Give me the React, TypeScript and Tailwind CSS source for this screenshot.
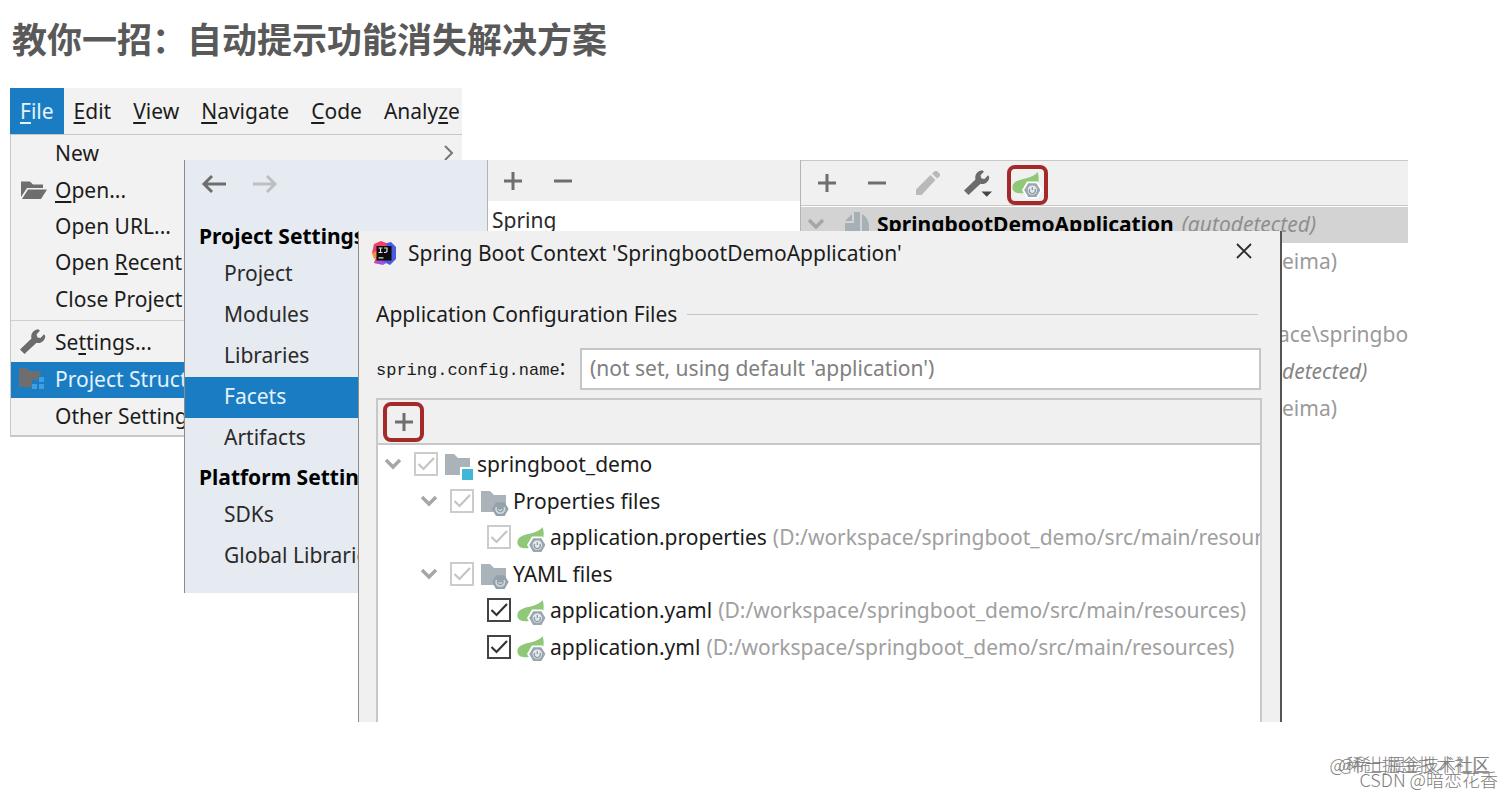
import React from "react";

function Arrow({ flip, className }: { flip?: boolean; className: string }) {
  return (
    <svg viewBox="0 0 26 20" className={"h-5 w-[26px] " + className} fill="none" stroke="currentColor" strokeWidth="3">
      {flip ? <path d="M1 10h22M15 2l8 8-8 8" /> : <path d="M25 10H3M11 2L3 10l8 8" />}
    </svg>
  );
}

function Plus() {
  return (
    <svg viewBox="0 0 20 20" className="h-5 w-5 text-[#6e6e6e]" fill="none" stroke="currentColor" strokeWidth="3">
      <path d="M1 10h18M10 1v18" />
    </svg>
  );
}

function Minus() {
  return (
    <svg viewBox="0 0 20 20" className="h-5 w-5 text-[#6e6e6e]" fill="none" stroke="currentColor" strokeWidth="3">
      <path d="M1 10h18" />
    </svg>
  );
}

function Chevron() {
  return (
    <svg viewBox="0 0 18 14" className="h-3.5 w-[18px] text-[#a6a6a6]" fill="none" stroke="currentColor" strokeWidth="3.4">
      <path d="M2 3l7 7 7-7" />
    </svg>
  );
}

function Wrench({ menu }: { menu?: boolean }) {
  return (
    <svg viewBox="0 0 30 28" className="h-7 w-[30px]" fill="#6b6b6b">
      <path d="M1 21.500L12.500 10.500C11.500 6.500 13.500 2 19 1.200L21 2.500L17.500 6.500L18.500 9.500L21.500 10L25 6.200L26.300 8C26 13 22 15.800 17.500 14.800L5.500 26Z" />
      {menu && <path d="M18.500 22.500h10.500l-5.200 5.300z" fill="#444" />}
    </svg>
  );
}

function Pencil() {
  return (
    <svg viewBox="0 0 26 26" className="h-[26px] w-[26px]" fill="#b9b9b9">
      <path d="M1 25V19.500L15.500 5L20.500 10L6.500 25Z" />
      <path d="M17 3.500L20 1L22 1L25 4V6L22 8.500Z" />
    </svg>
  );
}

function OpenFolder() {
  return (
    <svg viewBox="0 0 26 20" className="ml-0.5 h-5 w-[26px]" fill="#6e6e6e">
      <path d="M0 1.500h9l3 3h10V8H6L0 17Z" />
      <path d="M7 9.500h19L20 19H1Z" />
    </svg>
  );
}

function StructureFolder() {
  return (
    <svg viewBox="0 0 26 22" className="h-[22px] w-[26px]" fill="#6e6e6e">
      <path d="M0 0h8l3 3h11l-1 5h-2v4h-6v7H0Z" />
      <g fill="#3f9fe0">
        <path d="M20 9h5v5h-5zM13 16h5v5h-5zM20 16h5v5h-5z" />
      </g>
    </svg>
  );
}

function Nut({ rim }: { rim: string }) {
  return (
    <g>
      <path d="M15 9.500h10.500l5 8.500-5 8.500H15L10 18Z" fill={rim} />
      <path d="M16.200 11.200h8.200l4 6.900-4 6.900h-8.200l-4-6.900Z" fill="#9aa7b0" />
      <circle cx="20.300" cy="18.100" r="4.700" fill="#e9edef" />
      <path d="M17.800 16.800a3 3 0 1 0 5 0M20.300 15v3.200" stroke="#8c9aa3" strokeWidth="1.300" fill="none" />
    </g>
  );
}

function ModuleFolder() {
  return (
    <svg viewBox="0 0 30 26" className="h-[26px] w-[30px]">
      <path d="M1 0h9l4 4h12v17H1Z" fill="#aab3b9" />
      <path d="M16 13h13v13H16z" fill="#fff" />
      <path d="M18 15h11v11H18z" fill="#40b6d8" />
    </svg>
  );
}

function ConfigFolder() {
  return (
    <svg viewBox="0 0 30 26" className="h-[26px] w-[30px]">
      <path d="M1 0h9l4 4h12v17H1Z" fill="#aab3b9" />
      <path d="M16 11.200h8.600l4 6.900-4 6.900H16l-4-6.900Z" fill="#94a1aa" />
      <path d="M16.500 16a4.300 4.300 0 1 0 7.600 0" fill="none" stroke="#d3dade" strokeWidth="1.600" />
      <path d="M18.500 18.200a2 2 0 0 0 3.600 0" fill="none" stroke="#d3dade" strokeWidth="1.200" />
    </svg>
  );
}

function SpringFile() {
  return (
    <svg viewBox="0 0 31 27" className="h-[27px] w-[31px]">
      <path d="M25.500 0c1.500 4 1.500 8 .5 12L13 20.500c-3 1-5 1-7 .5-4 0-7-4-5-8.500C5 5.500 20 8 25.500 0Z" fill="#8fc878" />
      <Nut rim="#fff" />
    </svg>
  );
}

function IdeaLogo() {
  return (
    <svg viewBox="0 0 24 24" className="h-6 w-6">
      <path d="M2 3L9 0l8 3-4 20-11-1 2-6-4-4Z" fill="#f0416d" />
      <path d="M0 12l5-2v6l-3 2Z" fill="#fb8c3c" />
      <path d="M15 2l4-1 5 5v12l-6 6-8-4Z" fill="#4a5be0" />
      <path d="M2 22l6-4 6 4-3 2Z" fill="#a750d8" />
      <path d="M4.500 5h15v14.500h-15z" fill="#0b0b0b" />
      <path d="M6.500 7h4M8.500 7v4.500M6.500 11.500h4M12 7h3v3q0 1.500-3 1.500M6.500 16.800h5" stroke="#ddd" strokeWidth="1.200" fill="none" />
    </svg>
  );
}

function Underlined({ text, at }: { text: string; at: number }) {
  if (at < 0) return <span>{text}</span>;
  return (
    <span>
      {text.slice(0, at)}
      <span className="underline decoration-2 underline-offset-3">{text[at]}</span>
      {text.slice(at + 1)}
    </span>
  );
}

type MenuEntry = { text: string; at: number; icon?: React.ReactNode; selected?: boolean; more?: boolean };

function MenuRow({ item }: { item: MenuEntry }) {
  return (
    <button
      className={
        "flex w-full flex-1 items-center whitespace-nowrap pb-0.5 pr-2 text-left " +
        (item.selected ? "bg-[#1a7dc4] text-[#e6f2fb]" : "text-[#1c1c1c]")
      }
    >
      <span className="flex w-11 shrink-0 justify-start pl-2">{item.icon}</span>
      <Underlined text={item.text} at={item.at} />
      {item.more && (
        <svg viewBox="0 0 10 16" className="ml-auto h-4 w-2.5" fill="none" stroke="#777" strokeWidth="2">
          <path d="M1 1l7 7-7 7" />
        </svg>
      )}
    </button>
  );
}

const fileTop: MenuEntry[] = [
  { text: "New", at: -1, more: true },
  { text: "Open...", at: 0, icon: <OpenFolder /> },
  { text: "Open URL...", at: -1 },
  { text: "Open Recent", at: 5 },
  { text: "Close Project", at: 9 },
];

const fileBottom: MenuEntry[] = [
  { text: "Settings...", at: 2, icon: <Wrench /> },
  { text: "Project Structure...", at: -1, icon: <StructureFolder />, selected: true },
  { text: "Other Settings", at: -1 },
];

function MenuWindow() {
  const rest: [string, number][] = [["Edit", 0], ["View", 0], ["Navigate", 0], ["Code", 0], ["Analyze", 5]];
  return (
    <section className="absolute left-2.5 top-[88px] w-[452px] overflow-hidden bg-[#f2f2f2]">
      <nav className="flex h-[47px] items-stretch border-b border-[#c8c8c8] text-[#1c1c1c]">
        <button className="mr-2.5 bg-[#1a7dc4] px-2.5 text-[#e6f2fb]">
          <Underlined text="File" at={0} />
        </button>
        <div className="flex gap-[22px]">
          {rest.map(([text, at]) => (
            <button key={text}>
              <Underlined text={text} at={at} />
            </button>
          ))}
        </div>
      </nav>
      <div className="border-b-2 border-l border-[#c8c8c8]">
        <div className="flex h-[185px] flex-col pb-0.5 pt-px">
          {fileTop.map((item) => <MenuRow key={item.text} item={item} />)}
        </div>
        <div className="flex h-[115px] flex-col border-t border-[#cfcfcf] pt-1">
          {fileBottom.map((item) => <MenuRow key={item.text} item={item} />)}
        </div>
      </div>
    </section>
  );
}

function SideGroup({ title, items }: { title: string; items: string[] }) {
  return (
    <div>
      <h2 className="flex h-9 items-center whitespace-nowrap pl-3.5 font-bold text-black">{title}</h2>
      {items.map((name) => (
        <button
          key={name}
          className={
            "flex h-[41px] w-full items-center pb-1 pl-[39px] " +
            (name === "Facets" ? "bg-[#1a7dc4] text-[#e6f2fb]" : "text-[#2a2a2a]")
          }
        >
          {name}
        </button>
      ))}
    </div>
  );
}

function StructureWindow() {
  return (
    <section className="absolute left-[184px] top-40 flex h-[433px] w-[1224px] overflow-hidden border-l border-[#8c8c8c] bg-white">
      <aside className="w-[302px] shrink-0 bg-[#e6eaf1]">
        <div className="flex h-[58px] items-start gap-[25px] pl-4 pt-3.5">
          <button aria-label="Back"><Arrow className="text-[#6e6e6e]" /></button>
          <button aria-label="Forward"><Arrow flip className="text-[#bcbfc4]" /></button>
        </div>
        <SideGroup title="Project Settings" items={["Project", "Modules", "Libraries", "Facets", "Artifacts"]} />
        <SideGroup title="Platform Settings" items={["SDKs", "Global Libraries"]} />
      </aside>
      <div className="w-[314px] shrink-0 border-x border-[#b4b4b4]">
        <div className="flex h-[41px] items-center gap-[30px] bg-[#f0f0f0] pl-[15px]">
          <button aria-label="Add facet"><Plus /></button>
          <button aria-label="Remove facet"><Minus /></button>
        </div>
        <p className="flex h-[38px] items-center pl-1 text-[#2a2a2a]">Spring</p>
      </div>
      <div className="min-w-0 flex-1 border-t border-[#c8c8c8]">
        <div className="flex h-[45px] items-center border-b border-[#c8c8c8] bg-[#f0f0f0] pl-4">
          <button aria-label="Add context" className="mr-[30px]"><Plus /></button>
          <button aria-label="Remove context" className="mr-[28px]"><Minus /></button>
          <button aria-label="Edit context" className="mr-[22px]"><Pencil /></button>
          <button aria-label="Configure" className="mr-3.5"><Wrench menu /></button>
          <button aria-label="Customize Spring Boot" className="flex h-10 w-[41px] items-center justify-center self-end rounded-lg border-4 border-[#a32a28]">
            <SpringFile />
          </button>
        </div>
        <div className="mt-px flex h-9 items-center whitespace-nowrap bg-[#d3d3d3] pb-0.5 pl-1.5">
          <Chevron />
          <svg viewBox="0 0 24 26" className="ml-5 mr-2 h-[26px] w-6">
            <path d="M0 10L7 3v7ZM9 1h6v24H0V12h9Z" fill="#a5b0b7" />
            <path d="M17 3c4 2 7 7 7 13v9h-7Z" fill="#a5b0b7" />
          </svg>
          <b className="text-black">SpringbootDemoApplication</b>
          <i className="ml-2 text-[#8f8f8f]">(autodetected)</i>
        </div>
        <div className="flex h-[183px] flex-col whitespace-nowrap pl-[481px] text-[#9a9a9a]">
          <span className="flex flex-1 items-center">eima)</span>
          <span className="flex-1" />
          <span className="-ml-1 flex flex-1 items-center">ace\springboot</span>
          <i className="flex flex-1 items-center text-[#858585]">detected)</i>
          <span className="flex flex-1 items-center">eima)</span>
        </div>
      </div>
    </section>
  );
}

type Node = { name: string; path?: string; icon: React.ReactNode; pad: string; open?: boolean; dim?: boolean };

const resources = "(D:/workspace/springboot_demo/src/main/resources)";

const nodes: Node[] = [
  { name: "springboot_demo", icon: <ModuleFolder />, pad: "pl-1.5", open: true, dim: true },
  { name: "Properties files", icon: <ConfigFolder />, pad: "pl-[42px]", open: true, dim: true },
  { name: "application.properties", path: resources, icon: <SpringFile />, pad: "pl-[79px]", dim: true },
  { name: "YAML files", icon: <ConfigFolder />, pad: "pl-[42px]", open: true, dim: true },
  { name: "application.yaml", path: resources, icon: <SpringFile />, pad: "pl-[79px]" },
  { name: "application.yml", path: resources, icon: <SpringFile />, pad: "pl-[79px]" },
];

function TreeRow({ node }: { node: Node }) {
  return (
    <li className={"flex flex-1 items-center whitespace-nowrap " + node.pad}>
      <span className="mr-3 w-[18px] shrink-0">{node.open && <Chevron />}</span>
      <label className="flex items-center text-[#1c1c1c]">
        <span className="relative mr-1.5 h-6 w-6">
          <input
            type="checkbox"
            defaultChecked
            disabled={node.dim}
            className={"block h-6 w-6 appearance-none border-2 bg-white " + (node.dim ? "border-[#cccccc]" : "border-[#444444]")}
          />
          <svg
            viewBox="0 0 24 24"
            className={"pointer-events-none absolute inset-0 h-6 w-6 " + (node.dim ? "text-[#c4c4c4]" : "text-[#333333]")}
            fill="none"
            stroke="currentColor"
            strokeWidth="2.200"
          >
            <path d="M4.500 12l5 5L20 6" />
          </svg>
        </span>
        <span className="flex w-[33px] pt-1.5">{node.icon}</span>
        {node.name}
      </label>
      {node.path && <span className="ml-1.5 text-[#a0a0a0]">{node.path}</span>}
    </li>
  );
}

function ContextDialog() {
  return (
    <section
      role="dialog"
      aria-labelledby="context-title"
      className="absolute left-[358px] top-[231px] flex h-[491px] w-[924px] flex-col overflow-hidden border-l border-r-2 border-l-[#8c8c8c] border-r-[#555555] bg-[#f0f0f0] pl-[17px] pr-[18px] text-[#1c1c1c]"
    >
      <header className="-ml-1 flex h-[43px] items-center">
        <IdeaLogo />
        <h2 id="context-title" className="ml-3">Spring Boot Context 'SpringbootDemoApplication'</h2>
        <button aria-label="Close" className="ml-auto mr-2.5 pb-1">
          <svg viewBox="0 0 16 16" className="h-4 w-4" fill="none" stroke="#2b2b2b" strokeWidth="1.800">
            <path d="M1 1l14 14M15 1L1 15" />
          </svg>
        </button>
      </header>
      <h3 className="mt-6 flex h-8 items-center gap-2.5 pr-1 after:h-px after:flex-1 after:bg-[#c4c4c4]">
        Application Configuration Files
      </h3>
      <div className="mr-px mt-[18px] flex h-[42px] items-center">
        <label htmlFor="config-name" className="w-[204px] shrink-0">
          <span className="font-['Liberation_Mono',monospace] text-[17px]">spring.config.name</span>:
        </label>
        <input
          id="config-name"
          placeholder="(not set, using default 'application')"
          className="h-full min-w-0 flex-1 border-2 border-[#c6c6c6] bg-white px-2 pb-0.5 placeholder:text-[#808080]"
        />
      </div>
      <div className="mt-2 flex flex-1 flex-col border-x-2 border-t-2 border-[#c8c8c8] bg-white">
        <div className="flex h-[45px] shrink-0 items-center border-b-2 border-[#c8c8c8] bg-[#f0f0f0] pl-[5px]">
          <button aria-label="Add configuration file" className="flex h-10 w-[41px] items-center justify-center rounded-lg border-4 border-[#a32a28]">
            <Plus />
          </button>
        </div>
        <ul className="flex h-[220px] flex-col overflow-hidden pt-px">
          {nodes.map((node) => <TreeRow key={node.name} node={node} />)}
        </ul>
      </div>
    </section>
  );
}

export default function App() {
  return (
    <main className="relative min-h-screen overflow-hidden bg-white font-['Noto_Sans','Noto_Sans_CJK_SC',sans-serif] text-[21px] leading-7">
      <h1 className="pl-3 pt-3 font-['Noto_Sans_CJK_SC',sans-serif] text-[35px] font-bold leading-[52px] text-[#595959]">
        教你一招：自动提示功能消失解决方案
      </h1>
      <MenuWindow />
      <StructureWindow />
      <ContextDialog />
      <footer className="font-['Noto_Sans_CJK_SC',sans-serif] font-light text-[#7d7d7d]">
        <span className="absolute bottom-[18px] right-[22px] text-lg">@稀土掘金技术社区</span>
        <span className="absolute bottom-[18px] right-[22px] text-[17px]">@稀土掘金技术社区</span>
        <span className="absolute bottom-[3px] right-3.5 text-lg">CSDN @暗恋花香</span>
      </footer>
    </main>
  );
}
